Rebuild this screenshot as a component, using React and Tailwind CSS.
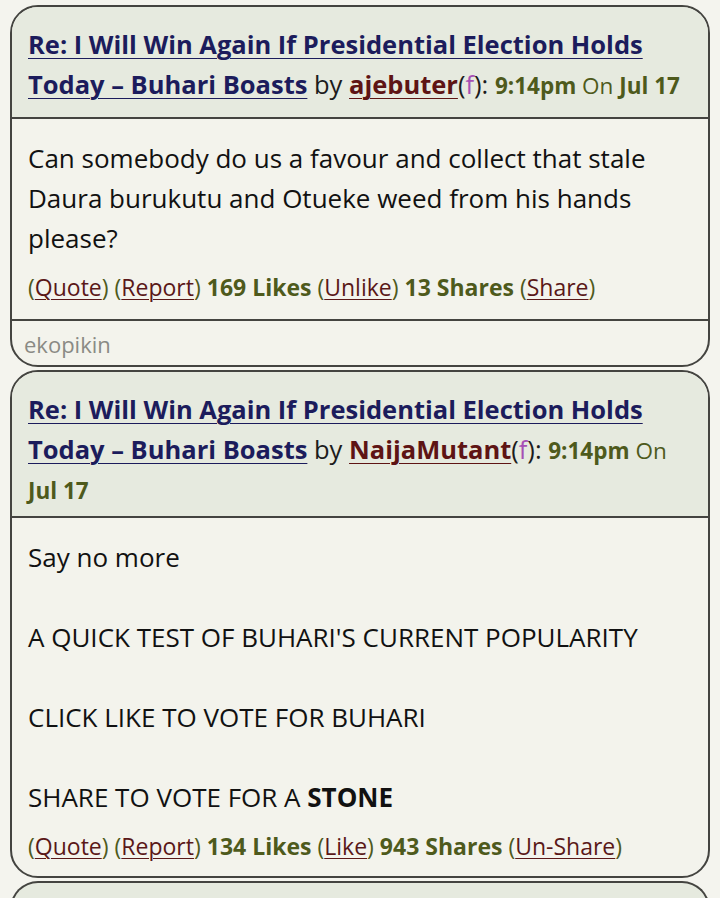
import React from 'react';

const posts = [
  {
    id: 1,
    title: 'Re: I Will Win Again If Presidential Election Holds Today – Buhari Boasts',
    author: 'ajebuter',
    time: '9:14pm',
    date: 'Jul 17',
    headerPad: 'pb-[13px]',
    body: [
      <span key="a">Can somebody do us a favour and collect that stale Daura burukutu and Otueke weed from his hands please?</span>,
    ],
    likes: '169 Likes',
    likeAction: 'Unlike',
    shares: '13 Shares',
    shareAction: 'Share',
    signature: 'ekopikin',
  },
  {
    id: 2,
    title: 'Re: I Will Win Again If Presidential Election Holds Today – Buhari Boasts',
    author: 'NaijaMutant',
    time: '9:14pm',
    date: 'Jul 17',
    headerPad: 'pb-[7px]',
    body: [
      <span key="a">Say no more</span>,
      <br key="b1" />,
      <br key="b2" />,
      <span key="c">A QUICK TEST OF BUHARI'S CURRENT POPULARITY</span>,
      <br key="b3" />,
      <br key="b4" />,
      <span key="d">CLICK LIKE TO VOTE FOR BUHARI</span>,
      <br key="b5" />,
      <br key="b6" />,
      <span key="e">
        SHARE TO VOTE FOR A <b className="font-bold">STONE</b>
      </span>,
    ],
    likes: '134 Likes',
    likeAction: 'Like',
    shares: '943 Shares',
    shareAction: 'Un-Share',
  },
];

const Paren = ({ children }) => (
  <>
    (<a className="text-[#5a1818] underline decoration-1 underline-offset-[3px]">{children}</a>)
  </>
);

const PostCard = ({ post }) => (
  <div className="mx-[10px] rounded-[28px] border-2 border-[#444440] overflow-hidden bg-[#f3f3ec]">
    <div className={`bg-[#e6eadf] border-b-2 border-[#444440] pl-[16px] pr-[12px] pt-[17px] ${post.headerPad} text-[25.5px] leading-[40px] text-[#1c1c1c]`}>
      <a className="font-bold text-[#1c1c5c] underline decoration-1 underline-offset-[4px]">{post.title}</a>{' '}
      by{' '}
      <a className="font-bold text-[#5e1414] underline decoration-1 underline-offset-[4px]">{post.author}</a>
      (<span className="text-[#a64fb5]">f</span>):{' '}
      <span className="text-[#4e5a1c] text-[22.5px] leading-none">
        <b className="font-bold">{post.time}</b> On <b className="font-bold">{post.date}</b>
      </span>
    </div>
    <div className={`pl-[16px] pr-[12px] pt-[19px] ${post.signature ? 'pb-[12px]' : 'pb-[10px]'}`}>
      <div className="text-[26px] leading-[40px] text-[#111]">{post.body}</div>
      <div className="text-[23px] leading-[40px] mt-[9px] text-[#4e5a1c]">
        <Paren>Quote</Paren> <Paren>Report</Paren> <b className="font-bold">{post.likes}</b>{' '}
        <Paren>{post.likeAction}</Paren> <b className="font-bold">{post.shares}</b>{' '}
        <Paren>{post.shareAction}</Paren>
      </div>
    </div>
    {post.signature && (
      <div className="border-t-2 border-[#444440] px-[12px] pt-[8px] pb-[6px] text-[22px] leading-[30px] text-[#8a8a84]">
        {post.signature}
      </div>
    )}
  </div>
);

const App = () => {
  return (
    <main
      className="min-h-[898px] bg-[#f4f4ee] pt-[5px] flex flex-col gap-[3px]"
      style={{ fontFamily: '"Open Sans", "Noto Sans", sans-serif' }}
    >
      {posts.map((post) => (
        <PostCard key={post.id} post={post} />
      ))}
      <div className="mx-[10px] h-[40px] rounded-t-[28px] border-2 border-b-0 border-[#444440] bg-[#e6eadf]" />
    </main>
  );
};

export default App;
